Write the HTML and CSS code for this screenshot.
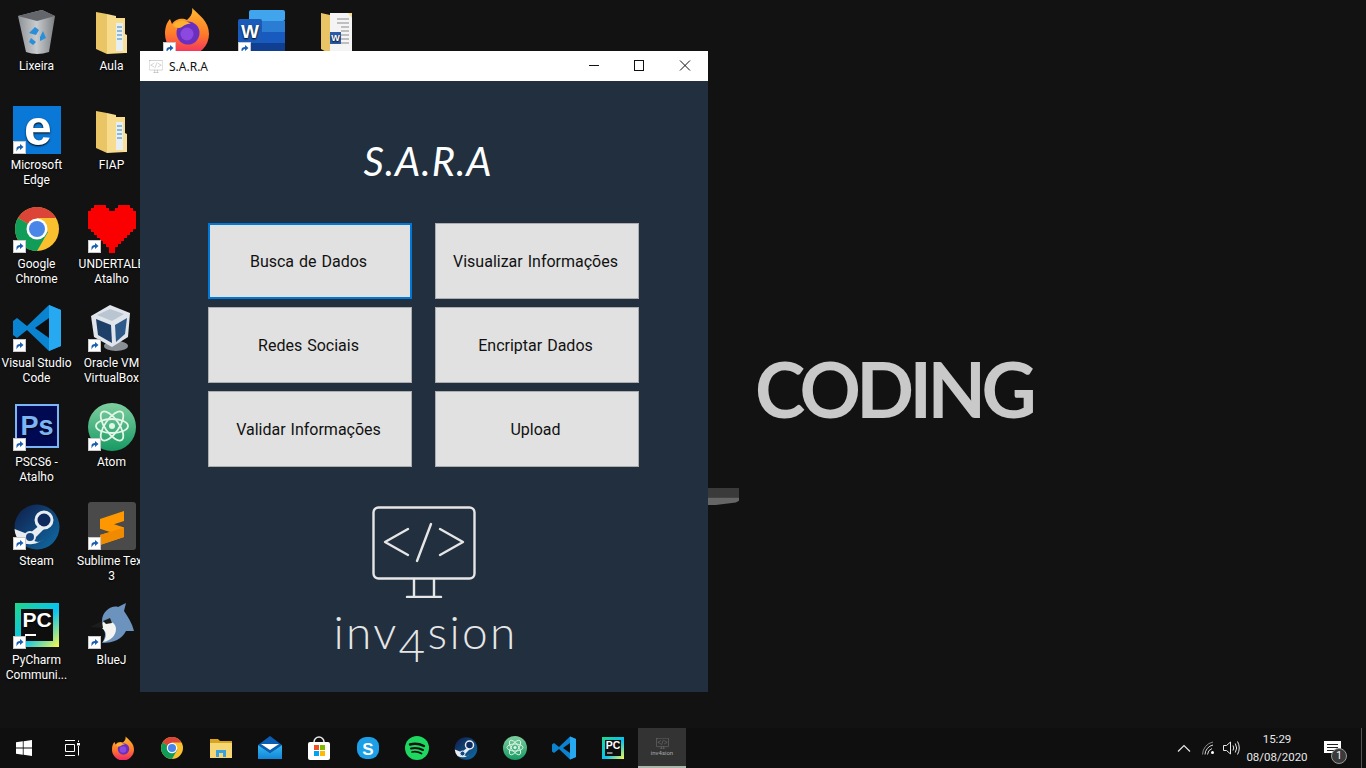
FILE: index.html

```html
<!DOCTYPE html>
<html lang="pt-BR">
<head>
  <meta charset="UTF-8" />
  <title>S.A.R.A</title>
  <link rel="stylesheet" href="styles.css">
</head>
<body>

<svg class="defs" width="0" height="0">
  <defs>
    <linearGradient id="g-bin" x1="0" y1="0" x2="1" y2="0"><stop offset="0" stop-color="#8d9296"/><stop offset=".5" stop-color="#c9ccce"/><stop offset="1" stop-color="#7d8184"/></linearGradient>
    <linearGradient id="g-fox" x1="0" y1="0" x2="0" y2="1"><stop offset="0" stop-color="#ffb92e"/><stop offset=".55" stop-color="#ff7a2a"/><stop offset="1" stop-color="#f0246a"/></linearGradient>
    <linearGradient id="g-atom" x1="0" y1="0" x2="0" y2="1"><stop offset="0" stop-color="#7fcf9f"/><stop offset="1" stop-color="#169a63"/></linearGradient>
    <linearGradient id="g-steam" x1="0" y1="0" x2="1" y2="1"><stop offset="0" stop-color="#101c48"/><stop offset="1" stop-color="#0f6ea8"/></linearGradient>
    <linearGradient id="g-pc" x1="0" y1="0" x2="1" y2="1"><stop offset="0" stop-color="#21d789"/><stop offset=".55" stop-color="#07c3f2"/><stop offset="1" stop-color="#fcf84a"/></linearGradient>
    <linearGradient id="g-mail" x1="0" y1="0" x2="0" y2="1"><stop offset="0" stop-color="#35b8f1"/><stop offset="1" stop-color="#1285d8"/></linearGradient>

    <symbol id="i-short" viewBox="0 0 13 13">
      <rect width="13" height="13" fill="#c9c9c9"/><rect x="1" y="1" width="11" height="11" fill="#fff"/>
      <path d="M3.500 10.500V7.500Q3.500 5 7 5V3L10.500 6 7 9V7Q5 7 3.500 10.500Z" fill="#1c5fb0"/>
    </symbol>
    <symbol id="i-bin" viewBox="0 0 48 48">
      <path d="M5 9 29 3 42 9 36 45Q24 49 13 45Z" fill="url(#g-bin)"/>
      <path d="M5 9 29 3 42 9 24 14Z" fill="#63676b"/>
      <path d="M16 26l6-6 4 3-3 5zM30 24l3 7-6 3v-4zM18 31l5 4-3 3-4-3z" fill="#2b8ed8"/>
    </symbol>
    <symbol id="i-folder" viewBox="0 0 48 48">
      <path d="M8 5 19 7V47L8 42Z" fill="#e9c566"/>
      <path d="M19 7 28 9 28 11 37 11V46L19 47Z" fill="#f6dc8c"/>
      <rect x="28" y="16" width="7" height="28" fill="#e6eef2"/>
      <path d="M29 20h5M29 24h5M29 28h5M29 32h5" stroke="#6fa8cc" stroke-width="1.500"/>
      <path d="M35 26 39 28V46H35Z" fill="#f8e09a"/>
    </symbol>
    <symbol id="i-docfolder" viewBox="0 0 48 48">
      <path d="M8 6 17 8V47L8 42Z" fill="#e9c566"/>
      <path d="M17 8 20 6H39V46L17 47Z" fill="#f6dc8c"/>
      <path d="M17 6H35L39 11V46H17Z" fill="#f4f4f4"/>
      <path d="M24 12h12M24 16h12M28 20h8M28 24h8M28 28h8M28 32h8M24 36h12" stroke="#8a8a8a" stroke-width="1.200"/>
      <rect x="17" y="25" width="11" height="12" fill="#2b5aa8"/>
      <text x="22.500" y="34" class="t-tile" font-size="9">W</text>
    </symbol>
    <symbol id="i-firefox" viewBox="0 0 48 48">
      <path d="M29 1C36 8 46 14 46 27A22 22 0 1 1 2 27C2 20 4 15 7 12L9 17C13 11 20 11 24 13 28 9 30 6 29 1Z" fill="url(#g-fox)"/>
      <circle cx="25" cy="26" r="11.500" fill="#6b2fc0"/>
      <circle cx="24" cy="27" r="6.500" fill="#8b49e0"/>
      <path d="M10 18C14 12 24 13 28 17 22 16 20 21 16 21 13 21 11 20 10 18Z" fill="#ffb22e"/>
    </symbol>
    <symbol id="i-word" viewBox="0 0 48 48">
      <rect x="11" y="3" width="36" height="11" rx="2" fill="#41a5ee"/>
      <rect x="11" y="14" width="36" height="11" fill="#2b7cd3"/>
      <rect x="11" y="25" width="36" height="11" fill="#185abd"/>
      <rect x="11" y="36" width="36" height="12" fill="#103f91"/>
      <rect x="0" y="12" width="24" height="24" rx="2" fill="#1a5ab8"/>
      <text x="12" y="31" class="t-tile" font-size="19">W</text>
    </symbol>
    <symbol id="i-edge" viewBox="0 0 48 48">
      <rect width="48" height="48" fill="#0a78d7"/>
      <text x="25" y="39" class="t-tile" font-size="50">e</text>
    </symbol>
    <symbol id="i-chrome" viewBox="0 0 48 48">
      <circle cx="24" cy="24" r="22" fill="#fbc02d"/>
      <path d="M24 24 5 13A22 22 0 0 1 43 13H24Z" fill="#db4437"/>
      <path d="M24 24 5 13A22 22 0 0 0 24 46L35 27Z" fill="#0f9d58"/>
      <circle cx="24" cy="24" r="10.500" fill="#fff"/><circle cx="24" cy="24" r="8" fill="#4a86e8"/>
    </symbol>
    <symbol id="i-heart" viewBox="0 0 48 48">
      <path d="M6 0H18V3H21V6H27V3H30V0H42V3H45V6H48V24H45V27H42V30H39V33H36V36H33V39H30V42H27V48H21V42H18V39H15V36H12V33H9V30H6V27H3V24H0V6H3V3H6Z" fill="#fa0000"/>
    </symbol>
    <symbol id="i-vscode" viewBox="0 0 48 48">
      <path d="M36 1 48 6V42L36 47 14 26 4 34 0 31V17L4 14 14 22Z" fill="#0a84d0"/>
      <path d="M36 1 48 6V42L36 47Z" fill="#27a9f1"/>
      <path d="M36 14V34L22 24Z" fill="#0e0e0e"/>
    </symbol>
    <symbol id="i-vbox" viewBox="0 0 48 48">
      <ellipse cx="28" cy="42" rx="12" ry="5" fill="#8a8f96"/>
      <path d="M22 1 42 9 40 33 24 43 6 33 3 12Z" fill="#dfe5ea"/>
      <path d="M8 15 23 21 24 39 10 31Z" fill="#1d3f68"/>
      <path d="M27 21 39 14 37 30 28 38Z" fill="#2e5a8a"/>
      <path d="M9 11 22 5 36 10 24 17Z" fill="#b9c6d2"/>
    </symbol>
    <symbol id="i-ps" viewBox="0 0 48 48">
      <rect x="3" y="2" width="42" height="42" fill="#000a52" stroke="#7cb5f5" stroke-width="2"/>
      <text x="24" y="32" class="t-tile t-ps" font-size="27">Ps</text>
    </symbol>
    <symbol id="i-atom" viewBox="0 0 48 48">
      <circle cx="24" cy="24" r="24" fill="url(#g-atom)"/>
      <g fill="none" stroke="#e4f5ea" stroke-width="1.800">
        <ellipse cx="24" cy="23" rx="7" ry="17" transform="rotate(-35 24 23)"/>
        <ellipse cx="24" cy="23" rx="7" ry="17" transform="rotate(35 24 23)"/>
        <ellipse cx="24" cy="23" rx="16" ry="7"/>
      </g>
      <circle cx="24" cy="23" r="3" fill="#e4f5ea"/>
    </symbol>
    <symbol id="i-steam" viewBox="0 0 48 48">
      <circle cx="24" cy="25" r="22.500" fill="url(#g-steam)"/>
      <path d="M1.500 27 17 33A8 8 0 0 0 31 37 22.500 22.500 0 0 1 7 40 22.500 22.500 0 0 1 1.500 27Z" fill="#e8edf2"/>
      <circle cx="31" cy="18" r="8" fill="#0f2a5c" stroke="#e8edf2" stroke-width="3"/>
      <path d="M17 31 27 23 31 27 23 35Z" fill="#e8edf2"/>
      <circle cx="17" cy="35" r="5" fill="#16487f" stroke="#e8edf2" stroke-width="2"/>
    </symbol>
    <symbol id="i-sublime" viewBox="0 0 48 48">
      <rect width="48" height="48" rx="3" fill="#4a4a4a"/>
      <path d="M36 9V19L26 22.300 36 25.500V35L12 43V33L22 30 12 26.800V17Z" fill="#ff9800"/>
      <path d="M36 25.500V35L12 43V33L22 30Z" fill="#f08a00"/>
    </symbol>
    <symbol id="i-pycharm" viewBox="0 0 48 48">
      <rect x="2" y="2" width="44" height="44" fill="url(#g-pc)"/>
      <rect x="8" y="8" width="32" height="32" fill="#0e0e0e"/>
      <text x="24" y="26" class="t-tile" font-size="21">PC</text>
      <rect x="12" y="33" width="11" height="2" fill="#fff"/>
    </symbol>
    <symbol id="i-bluej" viewBox="0 0 48 48">
      <path d="M14 20C14 10 24 4 30 6L38 2 36 10C40 16 44 22 46 30L38 30C34 38 26 42 14 42 18 36 18 30 14 27Z" fill="#6c93bd"/>
      <path d="M14 22C20 18 28 21 28 28 28 35 22 40 15 41 19 36 19 31 14 27Z" fill="#f4f4f0"/>
      <path d="M2 26 14 20 15 27Z" fill="#1c1c1c"/>
      <path d="M15 20 22 17 24 22 18 23Z" fill="#1c1c1c"/>
    </symbol>
    <symbol id="i-explorer" viewBox="0 0 24 24">
      <path d="M1 3H9L11 5H23V22H1Z" fill="#d9a520"/>
      <rect x="1" y="7" width="22" height="15" fill="#f7d774"/>
      <path d="M7 21V14H17V21H14V17H10V21Z" fill="#3aa0e0"/>
    </symbol>
    <symbol id="i-mail" viewBox="0 0 24 24">
      <path d="M0 9 12 0 24 9 12 17Z" fill="#0a5fb4"/>
      <path d="M3 8H21L12 14Z" fill="#fff"/>
      <path d="M0 9 12 17 24 9V23H0Z" fill="url(#g-mail)"/>
    </symbol>
    <symbol id="i-store" viewBox="0 0 24 24">
      <path d="M7 6A5 5 0 0 1 17 6" fill="none" stroke="#e8e8e8" stroke-width="1.500"/>
      <rect x="1" y="6" width="22" height="18" rx="2" fill="#fff"/>
      <rect x="7" y="9" width="5" height="5" fill="#f25022"/><rect x="13" y="9" width="5" height="5" fill="#7fba00"/>
      <rect x="7" y="15" width="5" height="5" fill="#00a4ef"/><rect x="13" y="15" width="5" height="5" fill="#ffb900"/>
    </symbol>
    <symbol id="i-skype" viewBox="0 0 24 24">
      <rect x="1" y="1" width="22" height="22" rx="9" fill="#1c9fe6"/>
      <text x="12" y="18.500" class="t-tile" font-size="17">S</text>
    </symbol>
    <symbol id="i-spotify" viewBox="0 0 24 24">
      <circle cx="12" cy="12" r="12" fill="#1ed760"/>
      <g fill="none" stroke="#101010" stroke-linecap="round">
        <path d="M5 8.500Q12 6.500 19 10" stroke-width="2.400"/>
        <path d="M6 12.500Q12 11 18 14" stroke-width="2"/>
        <path d="M7 16Q12 15 16.500 17.500" stroke-width="1.700"/>
      </g>
    </symbol>
    <symbol id="i-monitor" viewBox="0 0 104 92">
      <g fill="none" stroke="#e6e6e6" stroke-width="2.400" stroke-linecap="round" stroke-linejoin="round">
        <rect x="1.500" y="1.500" width="101" height="71" rx="5"/>
        <path d="M36 23 13 36 36 49M59 18 45 55M68 23 91 36 68 49"/>
        <path d="M42 73V90M62 73V90M35 91H69"/>
      </g>
    </symbol>
  </defs>
</svg>

<div class="desktop">
  <div class="icons">
    <div class="icon"><span class="pic"><svg><use href="#i-bin"/></svg></span><span>Lixeira</span></div>
    <div class="icon"><span class="pic"><svg><use href="#i-edge"/></svg><svg class="badge"><use href="#i-short"/></svg></span><span>Microsoft Edge</span></div>
    <div class="icon"><span class="pic"><svg><use href="#i-chrome"/></svg><svg class="badge"><use href="#i-short"/></svg></span><span>Google Chrome</span></div>
    <div class="icon"><span class="pic"><svg><use href="#i-vscode"/></svg><svg class="badge"><use href="#i-short"/></svg></span><span>Visual Studio Code</span></div>
    <div class="icon"><span class="pic"><svg><use href="#i-ps"/></svg><svg class="badge"><use href="#i-short"/></svg></span><span>PSCS6 - Atalho</span></div>
    <div class="icon"><span class="pic"><svg><use href="#i-steam"/></svg><svg class="badge"><use href="#i-short"/></svg></span><span>Steam</span></div>
    <div class="icon"><span class="pic"><svg><use href="#i-pycharm"/></svg><svg class="badge"><use href="#i-short"/></svg></span><span>PyCharm Communi...</span></div>

    <div class="icon"><span class="pic"><svg><use href="#i-folder"/></svg></span><span>Aula</span></div>
    <div class="icon"><span class="pic"><svg><use href="#i-folder"/></svg></span><span>FIAP</span></div>
    <div class="icon"><span class="pic"><svg><use href="#i-heart"/></svg><svg class="badge"><use href="#i-short"/></svg></span><span class="nowrap">UNDERTALE</span><span>Atalho</span></div>
    <div class="icon"><span class="pic"><svg><use href="#i-vbox"/></svg><svg class="badge"><use href="#i-short"/></svg></span><span>Oracle VM VirtualBox</span></div>
    <div class="icon"><span class="pic"><svg><use href="#i-atom"/></svg><svg class="badge"><use href="#i-short"/></svg></span><span>Atom</span></div>
    <div class="icon"><span class="pic"><svg><use href="#i-sublime"/></svg><svg class="badge"><use href="#i-short"/></svg></span><span class="nowrap">Sublime Text</span><span>3</span></div>
    <div class="icon"><span class="pic"><svg><use href="#i-bluej"/></svg><svg class="badge"><use href="#i-short"/></svg></span><span>BlueJ</span></div>

    <div class="icon top-row"><span class="pic"><svg><use href="#i-firefox"/></svg><svg class="badge"><use href="#i-short"/></svg></span></div>
    <div class="icon top-row"><span class="pic"><svg><use href="#i-word"/></svg><svg class="badge"><use href="#i-short"/></svg></span></div>
    <div class="icon top-row"><span class="pic"><svg><use href="#i-docfolder"/></svg></span></div>
  </div>

  <div class="wall-word">CODING</div>
  <div class="wall-scrap"></div>

  <div class="window">
    <div class="titlebar">
      <svg class="app-icon"><use href="#i-monitor"/></svg>
      <span class="app-name">S.A.R.A</span>
      <div class="controls">
        <svg width="46" height="30" viewBox="0 0 46 30"><path d="M19 14.500H29" stroke="#111" fill="none"/></svg>
        <svg width="46" height="30" viewBox="0 0 46 30"><rect x="18.500" y="9.500" width="9" height="10" stroke="#111" fill="none"/></svg>
        <svg width="46" height="30" viewBox="0 0 46 30"><path d="M18 9.500 28 19.500M28 9.500 18 19.500" stroke="#111" fill="none"/></svg>
      </div>
    </div>
    <div class="content">
      <h1 class="heading">S.A.R.A</h1>
      <div class="actions">
        <button class="btn btn-focus">Busca de Dados</button>
        <button class="btn">Visualizar Informações</button>
        <button class="btn">Redes Sociais</button>
        <button class="btn">Encriptar Dados</button>
        <button class="btn">Validar Informações</button>
        <button class="btn">Upload</button>
      </div>
      <svg class="monitor"><use href="#i-monitor"/></svg>
      <div class="brand">inv<span class="brand-four">4</span>sion</div>
    </div>
  </div>

  <div class="taskbar">
    <div class="task task-wide">
      <svg width="16" height="16" viewBox="0 0 16 16"><path d="M0 2.300 6.800 1.300V7.600H0ZM7.600 1.200 16 0V7.600H7.600ZM0 8.400H6.800V14.700L0 13.700ZM7.600 8.400H16V16L7.600 14.800Z" fill="#fff"/></svg>
    </div>
    <div class="task task-wide task-view">
      <svg width="16" height="16" viewBox="0 0 16 16"><path d="M1 .5H11M1 15.500H11M1.500 4.500H10.500V11.500H1.500ZM14.500 .5V2M14.500 6V15.500" stroke="#fff" fill="none"/><rect x="13" y="3" width="3" height="2.500" fill="#fff"/></svg>
    </div>
    <div class="task"><svg class="tb"><use href="#i-firefox"/></svg></div>
    <div class="task"><svg class="tb"><use href="#i-chrome"/></svg></div>
    <div class="task"><svg class="tb"><use href="#i-explorer"/></svg></div>
    <div class="task"><svg class="tb"><use href="#i-mail"/></svg></div>
    <div class="task"><svg class="tb"><use href="#i-store"/></svg></div>
    <div class="task"><svg class="tb"><use href="#i-skype"/></svg></div>
    <div class="task"><svg class="tb"><use href="#i-spotify"/></svg></div>
    <div class="task"><svg class="tb"><use href="#i-steam"/></svg></div>
    <div class="task"><svg class="tb"><use href="#i-atom"/></svg></div>
    <div class="task"><svg class="tb"><use href="#i-vscode"/></svg></div>
    <div class="task"><svg class="tb"><use href="#i-pycharm"/></svg></div>
    <div class="task task-active">
      <svg class="tb-app"><use href="#i-monitor"/></svg>
      <span class="tb-label">inv4sion</span>
    </div>

    <div class="tray">
      <svg width="14" height="8" viewBox="0 0 14 8"><path d="M1 7.500 7 1.500 13 7.500" stroke="#e8e8e8" stroke-width="1.200" fill="none"/></svg>
      <svg class="tray-wifi" width="14" height="14" viewBox="0 0 14 14"><g fill="none" stroke="#dcdcdc"><path d="M.5 13.500A13 13 0 0 1 11 1" stroke="#888"/><path d="M3 13.500A10 10 0 0 1 11 4"/><path d="M5.500 13.500A7 7 0 0 1 10 7.500"/></g><circle cx="10.500" cy="11.500" r="1.500" fill="#fff"/></svg>
      <svg class="tray-sound" width="17" height="14" viewBox="0 0 17 14"><path d="M.5 4.500H3.500L7.500 1V13L3.500 9.500H.5ZM10 4.500Q11.500 7 10 9.500M12.300 2.500Q15 7 12.300 11.500M14.500 .5Q18 7 14.500 13.500" stroke="#e8e8e8" fill="none"/></svg>
      <div class="clock"><span>15:29</span><span>08/08/2020</span></div>
      <div class="notify">
        <svg width="17" height="15" viewBox="0 0 17 15"><path d="M0 0H17V12H11L8 15V12H0Z" fill="#fff"/><path d="M3 3.500H14M3 6.500H14M3 9.500H10" stroke="#222"/></svg>
        <span class="notify-count">1</span>
      </div>
      <div class="show-desktop"></div>
    </div>
  </div>
</div>

</body>
</html>
```

FILE: styles.css

```css
* {
  box-sizing: border-box;
}
body {
  margin: 0;
  background-color: #111111;
  font-family: 'Roboto', sans-serif;
}
.defs {
  position: absolute;
}
.t-tile {
  fill: #ffffff;
  font-family: 'Liberation Sans', sans-serif;
  font-weight: 700;
  text-anchor: middle;
}
.t-ps {
  fill: #7cb5f5;
}
.desktop {
  position: relative;
  width: 1366px;
  height: 768px;
  overflow: hidden;
  background-color: #121212;
}

.icons {
  display: grid;
  grid-auto-flow: column;
  grid-template-rows: repeat(7, 99px);
  grid-auto-columns: 75px;
  margin-left: -1px;
  padding-top: 6px;
}
.icon {
  display: flex;
  flex-direction: column;
  align-items: center;
  padding-top: 1px;
  font-size: 12px;
  line-height: 15px;
  color: #ffffff;
  text-align: center;
  text-shadow: 0 1px 2px #000;
}
.icon .pic + span {
  margin-top: 4px;
}
.top-row {
  grid-row: 1;
}
.nowrap {
  white-space: nowrap;
}
.pic {
  display: block;
  position: relative;
  flex: none;
  width: 48px;
  height: 48px;
}
.pic svg {
  display: block;
  width: 48px;
  height: 48px;
}
.pic .badge {
  position: absolute;
  left: 0;
  bottom: 0;
  width: 13px;
  height: 13px;
}

.wall-word {
  position: absolute;
  left: 755px;
  top: 343px;
  font-family: 'Lato', sans-serif;
  font-weight: 700;
  font-size: 76px;
  line-height: 92px;
  letter-spacing: -4.6px;
  color: #c9c9c9;
}
.wall-scrap {
  position: absolute;
  left: 700px;
  top: 488px;
  width: 39px;
  height: 17px;
  background: linear-gradient(#3a3a3a 55%, #666666 60%);
  clip-path: polygon(0 0, 100% 0, 100% 75%, 92% 85%, 40% 100%, 0 100%);
}

.window {
  position: absolute;
  left: 140px;
  top: 51px;
  width: 568px;
  height: 641px;
  background-color: #212f3f;
}
.titlebar {
  display: flex;
  align-items: center;
  height: 30px;
  background-color: #ffffff;
  padding-left: 9px;
}
.app-icon {
  width: 14px;
  height: 13px;
  opacity: .9;
  filter: invert(.6);
}
.app-name {
  margin-left: 6px;
  font-family: 'Noto Sans', sans-serif;
  font-size: 12px;
  color: #111111;
}
.controls {
  display: flex;
  margin-left: auto;
}
.content {
  display: flex;
  flex-direction: column;
  align-items: center;
}
.heading {
  margin: 57px 0 0 8px;
  height: 85px;
  font-family: 'Lato', sans-serif;
  font-style: italic;
  font-weight: 400;
  font-size: 40px;
  line-height: 46px;
  letter-spacing: 1px;
  color: #ffffff;
}
.actions {
  display: grid;
  grid-template-columns: 204px 204px;
  grid-auto-rows: 76px;
  column-gap: 23px;
  row-gap: 8px;
  margin-right: 1px;
}
.btn {
  background-color: #e1e1e1;
  border: 1px solid #adadad;
  font-family: 'Roboto', sans-serif;
  font-size: 16px;
  word-spacing: 1px;
  color: #111111;
  padding: 0 3px 0 0;
}
.btn-focus {
  border: 2px solid #0078d7;
}
.monitor {
  width: 104px;
  height: 92px;
  margin-top: 39px;
}
.brand {
  height: 60px;
  margin-top: 4px;
  margin-left: 3px;
  font-family: 'Lato', sans-serif;
  font-weight: 300;
  font-size: 46px;
  line-height: 60px;
  letter-spacing: 2.3px;
  color: #e6e6e6;
}
.brand-four {
  vertical-align: -13px;
  line-height: 0;
}

.taskbar {
  position: absolute;
  left: 0;
  bottom: 0;
  display: flex;
  width: 100%;
  height: 40px;
  background-color: #0f0f0f;
}
.task {
  display: flex;
  align-items: center;
  justify-content: center;
  flex: none;
  width: 49px;
  height: 40px;
}
.task-wide {
  width: 48px;
}
.task-view {
  margin-right: 2px;
}
.tb {
  width: 24px;
  height: 24px;
}
.task-active {
  flex-direction: column;
  width: 48px;
  margin-left: 1px;
  background-color: #333333;
  border-bottom: 2px solid #a9b8aa;
}
.tb-app {
  width: 13px;
  height: 11px;
  opacity: .7;
}
.tb-label {
  font-size: 6px;
  line-height: 7px;
  color: #aaaaaa;
}
.tray {
  display: flex;
  align-items: center;
  margin-left: auto;
  height: 40px;
}
.tray-wifi {
  margin-left: 11px;
}
.tray-sound {
  margin-left: 7px;
}
.clock {
  display: flex;
  flex-direction: column;
  align-items: center;
  width: 72px;
  margin-left: 1px;
  font-size: 11.5px;
  line-height: 18px;
  color: #e8e8e8;
}
.notify {
  position: relative;
  width: 17px;
  height: 15px;
  margin-left: 11px;
  margin-right: 20px;
}
.notify svg {
  display: block;
}
.notify-count {
  position: absolute;
  left: 7px;
  top: 7px;
  width: 16px;
  height: 16px;
  border-radius: 50%;
  background-color: #3a3a3a;
  border: 1px solid #999;
  font-size: 10px;
  line-height: 14px;
  text-align: center;
  color: #fff;
}
.show-desktop {
  width: 1px;
  height: 40px;
  margin-right: 4px;
  background-color: #555555;
}
```
